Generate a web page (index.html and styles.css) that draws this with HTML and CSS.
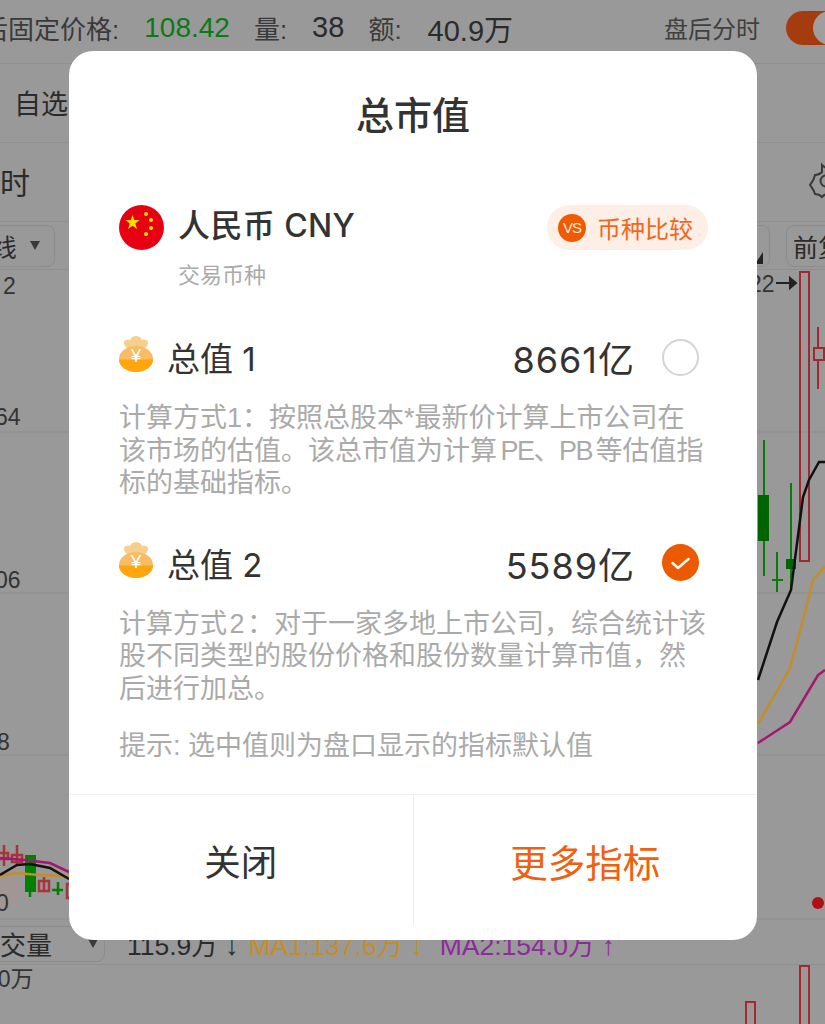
FILE: index.html
```html
<!DOCTYPE html>
<html lang="zh-CN">
<head>
<meta charset="utf-8">
<title>总市值</title>
<link rel="stylesheet" href="styles.css">
</head>
<body>
<div class="screen">
  <!-- Stock detail page, dimmed behind the dialog -->
  <div class="page">
    <div class="quote">
      <span class="quote-label">盘后固定价格:</span>
      <span class="quote-price">108.42</span>
      <span class="quote-label q-vol">量:</span>
      <span class="quote-num">38</span>
      <span class="quote-label q-amt">额:</span>
      <span class="quote-num">40.9万</span>
      <span class="quote-after">盘后分时</span>
      <span class="switch"><span class="switch-knob"></span></span>
    </div>
    <div class="tabs"><span>自选</span></div>
    <div class="periods">
      <span class="period">分时</span>
      <svg class="gear" width="20" height="36" viewBox="0 0 20 36">
        <path d="M9 2c3 3 6 4 10 3 1 4 3 7 5 9v8c-2 2-4 5-5 9-4-1-7 0-10 3-2-2-5-3-7-3-1-4-3-6-5-9 2-3 4-5 5-10 2 0 5-1 7-3z" fill="none" stroke="#3a3a3a" stroke-width="2"/>
        <circle cx="13" cy="18" r="5.500" fill="none" stroke="#3a3a3a" stroke-width="2"/>
      </svg>
    </div>
    <div class="toolbar">
      <span class="select select-k">K线<i class="caret"></i></span>
      <span class="select select-mid"><i class="corner"></i></span>
      <span class="select select-adj">前复权</span>
    </div>
    <svg class="chart" width="825" height="650" viewBox="0 270 825 650">
      <g stroke="#8d8d92" stroke-width="1">
        <line x1="0" y1="432" x2="825" y2="432"/>
        <line x1="0" y1="593" x2="825" y2="593"/>
        <line x1="0" y1="755" x2="825" y2="755"/>
        <line x1="0" y1="919" x2="825" y2="919"/>
      </g>
      <circle cx="0" cy="890" r="20" fill="#a19693"/>
      <g class="axis">
        <text x="3" y="294">2</text>
        <text x="-5" y="425">64</text>
        <text x="-5" y="588">06</text>
        <text x="-3" y="750">8</text>
        <text x="-4" y="911">0</text>
        <text x="749" y="292">22</text>
      </g>
      <path d="M776 283h18M790 278l6 5-6 5z" fill="#222" stroke="#222" stroke-width="2"/>
      <!-- Candles on the right edge -->
      <g fill="none" stroke="#a3282e" stroke-width="2">
        <rect x="800" y="272" width="9" height="289"/>
        <path d="M818 327v62"/>
        <rect x="814" y="348" width="10" height="12" fill="#999"/>
      </g>
      <g stroke="#0a7a0a" stroke-width="2" fill="none">
        <path d="M764 440v136M777 552v40M772 580h11M791 483v106"/>
      </g>
      <rect x="758" y="495" width="11" height="46" fill="#006400"/>
      <rect x="786" y="559" width="10" height="10" fill="#006400"/>
      <!-- Moving averages on the right edge -->
      <g fill="none" stroke-width="2.500">
        <polyline stroke="#111" points="758,680 777,622 791,590 803,497 809,480 819,462 825,462"/>
        <polyline stroke="#c58d28" points="758,724 790,668 803,620 813,580 825,566"/>
        <polyline stroke="#a3186f" points="758,743 790,722 818,675 825,670"/>
      </g>
      <circle cx="818" cy="903" r="6" fill="#b01015"/>
      <!-- Candles on the left edge -->
      <g fill="none" stroke="#a8353a" stroke-width="2.500">
        <path d="M4 845v21M17 845v21M44 877v15"/>
        <rect x="-2" y="853" width="10" height="6"/>
        <rect x="12" y="855" width="10" height="7"/>
        <rect x="39" y="881" width="10" height="10"/>
        <rect x="67" y="884" width="6" height="14"/>
      </g>
      <rect x="25" y="855" width="11" height="37" fill="#008000"/>
      <g stroke="#008000" stroke-width="2.500"><path d="M30 890v7M58 882v13M52 890h11"/></g>
      <g fill="none" stroke-width="2.500">
        <polyline stroke="#c58d28" points="0,876 15,873 40,875 69,876"/>
        <polyline stroke="#111" points="0,875 17,865 30,864 50,868 69,879"/>
        <polyline stroke="#a3186f" points="0,858 25,860 50,863 69,872"/>
      </g>
    </svg>
    <div class="vol-bar">
      <span class="select select-vol">成交量<i class="caret"></i></span>
      <span class="vol-value">115.9万 ↓</span>
      <span class="vol-ma1">MA1:137.6万 ↓</span>
      <span class="vol-ma2">MA2:154.0万 ↑</span>
    </div>
    <svg class="vol-chart" width="825" height="59" viewBox="0 965 825 59">
      <text class="axis" x="-15" y="987">00万</text>
      <g fill="none" stroke="#a8282c" stroke-width="2">
        <rect x="746" y="1002" width="9" height="40"/>
        <rect x="800" y="966" width="9" height="80"/>
      </g>
    </svg>
  </div>

  <!-- Market value dialog -->
  <div class="dialog">
    <h1 class="dialog-title">总市值</h1>
    <div class="currency">
      <svg class="flag" width="45" height="45" viewBox="0 0 45 45">
        <circle cx="22.500" cy="22.500" r="22.500" fill="#e60012"/>
        <polygon fill="#ffde00" points="13.500,10 15.300,15 20.500,15 16.300,18.500 18,24 13.500,20.700 9,24 10.700,18.500 6.500,15 11.700,15"/>
        <g fill="#ffde00">
          <circle cx="27" cy="9" r="2"/>
          <circle cx="32" cy="15" r="2"/>
          <circle cx="32" cy="23" r="2"/>
          <circle cx="27" cy="29" r="2"/>
        </g>
      </svg>
      <div class="currency-text">
        <div class="currency-name">人民币 CNY</div>
        <div class="currency-sub">交易币种</div>
      </div>
      <div class="compare">
        <span class="vs">VS</span>
        <span>币种比较</span>
      </div>
    </div>

    <div class="value-head">
      <svg class="bag" width="34" height="36" viewBox="0 0 34 36">
        <path d="M5 8C4 4 8 3 11 4c1-3 4-4 6-4s5 1 6 4c3-1 7 0 6 4-1 3-4 5-6 5H11c-2 0-5-2-6-5z" fill="#f6cf8f"/>
        <ellipse cx="17" cy="23" rx="17" ry="13" fill="#f9bb63"/>
        <path d="M0 23.500a17 12.500 0 0 0 34 0z" fill="#ffa60d"/>
        <text x="17" y="26" class="bag-mark">¥</text>
      </svg>
      <span class="value-name">总值 1</span>
      <span class="value-num">8661亿</span>
      <span class="radio"></span>
    </div>
    <p class="desc">计算方式1：按照总股本*最新价计算上市公司在<br>该市场的估值。该总市值为计算 <span class="latin">PE、PB</span> 等估值指<br>标的基础指标。</p>

    <div class="value-head value-head-second">
      <svg class="bag" width="34" height="36" viewBox="0 0 34 36">
        <path d="M5 8C4 4 8 3 11 4c1-3 4-4 6-4s5 1 6 4c3-1 7 0 6 4-1 3-4 5-6 5H11c-2 0-5-2-6-5z" fill="#f6cf8f"/>
        <ellipse cx="17" cy="23" rx="17" ry="13" fill="#f9bb63"/>
        <path d="M0 23.500a17 12.500 0 0 0 34 0z" fill="#ffa60d"/>
        <text x="17" y="26" class="bag-mark">¥</text>
      </svg>
      <span class="value-name">总值 2</span>
      <span class="value-num">5589亿</span>
      <span class="radio radio-on">
        <svg width="37" height="37" viewBox="0 0 37 37"><path d="M10.500 19l5.500 5 10.500-9" fill="none" stroke="#fff" stroke-width="2.500" stroke-linecap="round" stroke-linejoin="round"/></svg>
      </span>
    </div>
    <p class="desc">计算方式<span class="digit">2</span>：对于一家多地上市公司，综合统计该<br>股不同类型的股份价格和股份数量计算市值，然<br>后进行加总。</p>

    <p class="hint">提示: 选中值则为盘口显示的指标默认值</p>

    <div class="dialog-actions">
      <div class="action">关闭</div>
      <div class="action action-primary">更多指标</div>
    </div>
  </div>
</div>
</body>
</html>
```

FILE: styles.css
```css
* { box-sizing: border-box; }

html, body {
  margin: 0;
  padding: 0;
}

body {
  font-family: "Liberation Sans", "Noto Sans CJK SC", sans-serif;
  color: #333;
}

.screen {
  position: relative;
  width: 825px;
  height: 1024px;
  overflow: hidden;
  background: #999;
}

.page {
  display: flex;
  flex-direction: column;
  height: 1024px;
  color: #2b2b2b;
}

/* Quote strip */
.quote {
  display: flex;
  align-items: center;
  height: 64px;
  margin-left: -44px;
  padding-bottom: 8px;
  font-size: 26px;
  white-space: nowrap;
  border-bottom: 1px solid #8f8f8f;
}

.quote-label { color: #3a3a3a; }
.quote-price { margin-left: 25px; font-size: 28px; color: #0c7a12; }
.quote-num { margin-left: 25px; font-size: 29px; }
.q-vol { margin-left: 24px; }
.q-amt { margin-left: 24px; }
.q-amt + .quote-num { margin-left: 26px; }

.quote-after {
  margin-left: auto;
  margin-right: 26px;
  font-size: 24px;
  color: #404040;
}

.switch {
  flex: none;
  width: 60px;
  height: 34px;
  margin-right: -21px;
  border-radius: 17px;
  background: #a53c0f;
  padding-left: 27px;
}

.switch-knob {
  display: block;
  width: 34px;
  height: 34px;
  border-radius: 50%;
  background: #9f9f9f;
}

.tabs {
  display: flex;
  align-items: center;
  height: 79px;
  padding-left: 14px;
  padding-bottom: 2px;
  font-size: 27px;
  border-bottom: 1px solid #8f8f8f;
}

.periods {
  display: flex;
  align-items: center;
  justify-content: space-between;
  height: 79px;
  margin-left: -30px;
  padding-bottom: 2px;
  font-size: 30px;
  border-bottom: 1px solid #8f8f8f;
}

.gear { flex: none; margin-right: -8px; overflow: visible; }

.toolbar {
  display: flex;
  align-items: center;
  height: 48px;
  border-bottom: 1px solid #8f8f8f;
  font-size: 25px;
}

.select {
  display: flex;
  align-items: center;
  height: 42px;
  border: 1px solid #8c8c8c;
  border-radius: 8px;
  white-space: nowrap;
}

.select-k {
  width: 129px;
  margin-left: -74px;
  padding-left: 48px;
}

.select-mid {
  position: relative;
  width: 100px;
  margin-left: auto;
}

.corner {
  position: absolute;
  right: 6px;
  bottom: 2px;
  border-left: 8px solid transparent;
  border-bottom: 12px solid #222;
}

.select-adj {
  width: 100px;
  margin-left: 16px;
  margin-right: -61px;
  padding-left: 6px;
}

.caret {
  width: 0;
  height: 0;
  margin-left: 13px;
  border-left: 5px solid transparent;
  border-right: 5px solid transparent;
  border-top: 9px solid #3a3a3a;
}

.chart { display: block; flex: none; }

.axis {
  font-size: 23px;
  fill: #333;
}

.vol-bar {
  display: flex;
  align-items: center;
  gap: 16px;
  height: 45px;
  padding-top: 3px;
  font-size: 26.500px;
  white-space: nowrap;
  border-bottom: 1px solid #8f8f8f;
}

.select-vol {
  width: 132px;
  margin-left: -27px;
  margin-right: 6px;
  height: 36px;
  font-size: 26px;
}

.select-vol .caret { margin-left: 36px; }

.vol-ma1 { color: #c58d28; margin-left: -6px; }
.vol-ma2 { color: #8e2a9c; }

.vol-chart { display: block; flex: none; }

/* Dialog */
.dialog {
  position: absolute;
  left: 69px;
  top: 51px;
  width: 688px;
  height: 889px;
  border-radius: 24px;
  background: #fff;
  padding: 0 50px;
  display: flex;
  flex-direction: column;
}

.dialog-title {
  margin: 0;
  padding-top: 38px;
  font-size: 38px;
  line-height: 54px;
  font-weight: 500;
  text-align: center;
  color: #333;
}

.currency {
  display: flex;
  align-items: flex-start;
  margin-top: 62px;
}

.flag { flex: none; }

.currency-text { margin-left: 14px; }

.currency-name {
  font-family: Inter, "Noto Sans CJK SC", sans-serif;
  font-size: 32px;
  line-height: 42px;
  font-weight: 500;
  letter-spacing: 0.400px;
  color: #333;
}

.currency-sub {
  margin-top: 13px;
  font-size: 22px;
  line-height: 32px;
  color: #aaa;
}

.compare {
  display: flex;
  align-items: center;
  gap: 11px;
  height: 45px;
  margin-left: auto;
  margin-right: -1px;
  padding: 0 15px 0 11px;
  border-radius: 23px;
  background: #fdeee6;
  font-size: 24px;
  color: #f4661b;
}

.vs {
  display: flex;
  align-items: center;
  justify-content: center;
  width: 28px;
  height: 28px;
  border-radius: 50%;
  background: #f05a00;
  color: #fde9dc;
  font-size: 15px;
  letter-spacing: -1px;
}

.value-head {
  display: flex;
  align-items: center;
  height: 44px;
  margin-top: 43px;
}

.value-head-second { margin-top: 41px; }

.bag { flex: none; margin-top: -6px; }

.bag-mark {
  font-size: 19px;
  fill: #fff;
  text-anchor: middle;
}

.value-name {
  margin-left: 14px;
  font-family: Inter, "Noto Sans CJK SC", sans-serif;
  font-size: 33px;
  color: #333;
}

.value-num {
  margin-left: auto;
  font-family: Inter, "Noto Sans CJK SC", sans-serif;
  font-size: 36px;
  letter-spacing: 1px;
  color: #333;
}

.radio {
  flex: none;
  width: 37px;
  height: 37px;
  margin: 0 8px 0 27px;
  border: 2px solid #d4d4d4;
  border-radius: 50%;
}

.radio-on {
  border: 0;
  background: #ec5a00;
}

.radio-on svg { display: block; }

.desc {
  margin: 23px -8px 0 0;
  font-size: 27px;
  line-height: 32.500px;
  word-spacing: -4px;
  white-space: nowrap;
  color: #aaa;
}

.latin { letter-spacing: -1.500px; }

.digit { padding: 0 2.500px; }

.hint {
  margin: 25px 0 0;
  font-size: 27px;
  line-height: 32.500px;
  color: #aaa;
}

.dialog-actions {
  display: flex;
  margin: auto -50px 0;
  height: 146px;
  border-top: 1px solid #eee;
  padding-bottom: 15px;
}

.action {
  flex: 1;
  display: flex;
  align-items: center;
  justify-content: center;
  font-size: 36.500px;
  color: #333;
}

.action-primary {
  border-left: 1px solid #eee;
  font-size: 37.500px;
  color: #f0600f;
}
```
